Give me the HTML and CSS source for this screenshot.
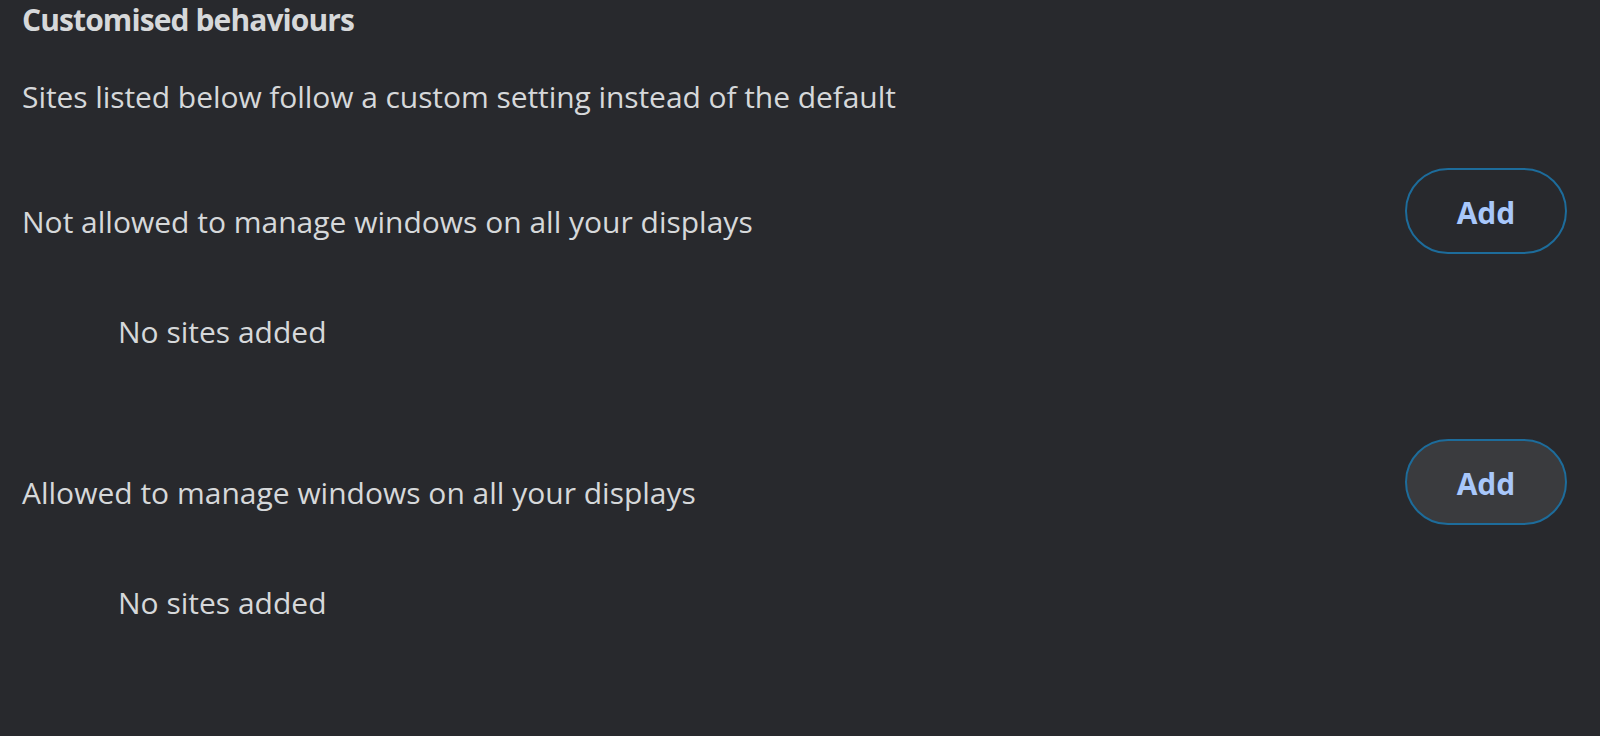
FILE: index.html
```html
<!DOCTYPE html>
<html lang="en">
<head>
<meta charset="utf-8">
<title>Customised behaviours</title>
<link rel="stylesheet" href="styles.css">
</head>
<body>
<main class="page">
  <h2 class="heading">Customised behaviours</h2>
  <p class="subtitle">Sites listed below follow a custom setting instead of the default</p>

  <section class="group">
    <div class="row">
      <span class="label">Not allowed to manage windows on all your displays</span>
      <button class="add-btn">Add</button>
    </div>
    <div class="empty">No sites added</div>
  </section>

  <section class="group group-second">
    <div class="row">
      <span class="label">Allowed to manage windows on all your displays</span>
      <button class="add-btn add-btn-hover">Add</button>
    </div>
    <div class="empty">No sites added</div>
  </section>
</main>
</body>
</html>
```
FILE: styles.css
```css
html, body {
  margin: 0;
  padding: 0;
  background: #28292d;
  height: 100%;
}

.page {
  font-family: "Open Sans", "Noto Sans", sans-serif;
  font-size: 30px;
  line-height: 40px;
  color: #d6d8da;
  padding: 0 33px 0 22px;
}

.heading {
  margin: 0;
  font-size: 30px;
  font-weight: 700;
  line-height: 40px;
  letter-spacing: -0.9px;
}

.subtitle {
  margin: 37px 0 0 0;
  letter-spacing: -0.07px;
}

.group {
  margin-top: 51px;
}

.group-second {
  margin-top: 87px;
}

.row {
  display: flex;
  align-items: center;
  justify-content: space-between;
  height: 86px;
}

.label {
  padding-top: 22px;
}

.add-btn {
  box-sizing: border-box;
  width: 162px;
  height: 86px;
  border: 2px solid #1d6c9b;
  border-radius: 43px;
  background: transparent;
  color: #a8c7fa;
  font-family: "Open Sans", "Noto Sans", sans-serif;
  font-size: 30px;
  font-weight: 700;
  padding: 2px 0 0 0;
}

.add-btn-hover {
  background: #3a3b3e;
}

.empty {
  margin-top: 58px;
  padding-left: 96px;
}
```
